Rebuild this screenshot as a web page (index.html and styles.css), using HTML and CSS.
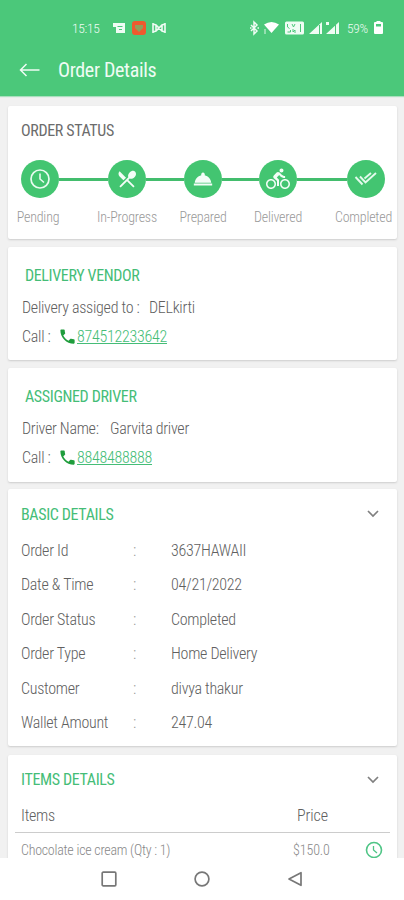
FILE: index.html
```html
<!DOCTYPE html>
<html lang="en">
<head>
<meta charset="utf-8">
<title>Order Details</title>
<link rel="stylesheet" href="styles.css">
</head>
<body>
<div class="screen">
  <header class="header">
    <div class="statusbar">
      <span class="clock">15:15</span>
      <svg class="notif" width="56" height="16" viewBox="0 0 56 16">
        <path fill="#effcf4" d="M0 3h12v10H3V7H0z"/>
        <path stroke="#4bc87a" stroke-width="1" fill="none" d="M4.500 6.500h5M6 9.500h3"/>
        <rect x="19" y="1" width="14" height="14" rx="3" fill="#ee5a2e"/>
        <path fill="#8fa05a" d="M26 12l-4-4V5h8v3z"/>
        <path stroke="#effcf4" stroke-width="1.600" fill="none" d="M40 3v10M52 3v10M40 4l3 1 6 6 3 1M52 4l-3 1-6 6-3 1M43 5v6M49 5v6"/>
      </svg>
      <svg class="signals" width="90" height="16" viewBox="0 0 90 16">
        <path stroke="#effcf4" stroke-width="1.500" fill="none" d="M2 5l6 6-3 3V2l3 3-6 6M1 8h1.500M8.500 8H10"/>
        <path fill="#fff" d="M15 4.500q7.500-5 15 0L22.500 13z"/>
        <path stroke="#dff7e8" fill="none" d="M16 9v5"/>
        <rect x="36" y="1.500" width="19" height="13" rx="1.500" fill="#effcf4"/>
        <path stroke="#4bc87a" fill="none" d="M38.500 4v3l2 1.500M43 4l1.500 3L46 4M38.500 12h3v-2M44 9v3l2-2v3M51.500 4v8"/>
        <path fill="#effcf4" d="M60 14L73 2v12zM77 14L90 2v12zM77 2h3v3h-3z"/>
        <path stroke="#4bc87a" fill="none" d="M70.500 5v9M86.500 5v9"/>
      </svg>
      <span class="percent">59%</span>
      <svg class="battery" width="9" height="14" viewBox="0 0 9 14"><path fill="#fff" d="M2.500 0h4v1H8q1 0 1 1v10q0 1-1 1H1q-1 0-1-1V2q0-1 1-1h1.500z"/><path fill="#4bc87a" d="M2 3h5v2.500H2z"/></svg>
    </div>
    <div class="appbar">
      <svg width="22" height="16" viewBox="0 0 22 16"><path stroke="#effcf4" stroke-width="1.500" fill="none" d="M20.500 8H2M7.500 2L1.500 8l6 6"/></svg>
      <h1 class="title">Order Details</h1>
    </div>
  </header>

  <main class="content">
    <section class="card card-status">
      <h2 class="heading heading-dark">ORDER STATUS</h2>
      <div class="stepper">
        <div class="step">
          <div class="dot"><svg width="22" height="22" viewBox="0 0 22 22"><circle cx="11" cy="11" r="9" fill="none" stroke="#e8fbf0" stroke-width="1.700"/><path fill="none" stroke="#e8fbf0" stroke-width="1.600" d="M11 5.500V11l4 3.500"/></svg></div>
          <span class="step-label label-first">Pending</span>
        </div>
        <i class="line line-a"></i>
        <div class="step">
          <div class="dot"><svg width="22" height="22" viewBox="0 0 24 24" fill="#f3fdf7"><path d="M8.100 13.340l2.830-2.830L3.910 3.500c-1.560 1.560-1.560 4.090 0 5.660l4.190 4.180zm6.780-1.810c1.530.71 3.680.21 5.270-1.380 1.910-1.910 2.280-4.650.81-6.120-1.460-1.460-4.200-1.100-6.120.81-1.590 1.590-2.090 3.740-1.380 5.270L3.700 19.870l1.410 1.410L12 14.410l6.880 6.880 1.410-1.410L13.410 13l1.470-1.470z"/></svg></div>
          <span class="step-label">In-Progress</span>
        </div>
        <i class="line line-b"></i>
        <div class="step">
          <div class="dot"><svg width="22" height="22" viewBox="0 0 24 24" fill="#f3fdf7"><path d="M2 17h20v2.200H2zM13.840 7.790A2 2 0 1 0 10.160 7.790C6.250 8.600 3.270 11.930 3 16h18c-.27-4.070-3.250-7.400-7.160-8.210z"/></svg></div>
          <span class="step-label">Prepared</span>
        </div>
        <i class="line line-c"></i>
        <div class="step">
          <div class="dot"><svg width="24" height="24" viewBox="0 0 24 24" fill="#f3fdf7"><path d="M15.500 5.500c1.100 0 2-.9 2-2s-.9-2-2-2-2 .9-2 2 .9 2 2 2zM5 12c-2.800 0-5 2.200-5 5s2.200 5 5 5 5-2.200 5-5-2.200-5-5-5zm0 8.500c-1.900 0-3.500-1.600-3.500-3.500s1.600-3.500 3.500-3.500 3.500 1.600 3.500 3.500-1.600 3.500-3.500 3.500zm5.800-10l2.400-2.400.8.800c1.300 1.300 3 2.100 5.100 2.100V9c-1.500 0-2.700-.6-3.600-1.500l-1.900-1.900c-.5-.4-1-.6-1.600-.6s-1.100.2-1.400.6L7.800 8.400c-.4.400-.6.900-.6 1.400 0 .6.200 1.100.6 1.400L11 14v5h2v-6.200l-2.200-2.300zM19 12c-2.800 0-5 2.200-5 5s2.200 5 5 5 5-2.200 5-5-2.200-5-5-5zm0 8.500c-1.900 0-3.500-1.600-3.500-3.500s1.600-3.500 3.500-3.500 3.500 1.600 3.500 3.500-1.600 3.500-3.500 3.500z"/></svg></div>
          <span class="step-label">Delivered</span>
        </div>
        <i class="line line-d"></i>
        <div class="step">
          <div class="dot"><svg width="24" height="24" viewBox="0 0 24 24" fill="none" stroke="#e3faec" stroke-width="1.900"><path d="M1.500 10l7 7.500M6 9.500l5.500 6L22 6M10.500 11.500L17 6"/></svg></div>
          <span class="step-label label-last">Completed</span>
        </div>
      </div>
    </section>

    <section class="card card-contact">
      <h2 class="heading inset">DELIVERY VENDOR</h2>
      <p class="row"><span class="key-vendor">Delivery assiged to :</span><span>DELkirti</span></p>
      <p class="row"><span class="key-call">Call :</span><svg class="phone" width="19" height="19" viewBox="0 0 24 24"><path fill="#1f9d3c" d="M6.620 10.790c1.440 2.830 3.760 5.140 6.590 6.590l2.200-2.200c.27-.27.67-.36 1.020-.24 1.120.37 2.330.57 3.570.57.550 0 1 .45 1 1V20c0 .55-.45 1-1 1-9.390 0-17-7.610-17-17 0-.55.45-1 1-1h3.500c.55 0 1 .45 1 1 0 1.250.2 2.450.57 3.570.11.350.03.740-.25 1.020l-2.200 2.200z"/></svg><span class="tel">874512233642</span></p>
    </section>

    <section class="card card-contact card-driver">
      <h2 class="heading inset">ASSIGNED DRIVER</h2>
      <p class="row"><span class="key-driver">Driver Name:</span><span>Garvita driver</span></p>
      <p class="row"><span class="key-call">Call :</span><svg class="phone" width="19" height="19" viewBox="0 0 24 24"><path fill="#1f9d3c" d="M6.620 10.790c1.440 2.830 3.760 5.140 6.590 6.590l2.200-2.200c.27-.27.67-.36 1.020-.24 1.120.37 2.330.57 3.570.57.550 0 1 .45 1 1V20c0 .55-.45 1-1 1-9.390 0-17-7.610-17-17 0-.55.45-1 1-1h3.500c.55 0 1 .45 1 1 0 1.250.2 2.450.57 3.570.11.350.03.740-.25 1.020l-2.200 2.200z"/></svg><span class="tel">8848488888</span></p>
    </section>

    <section class="card card-basic">
      <div class="card-head"><h2 class="heading">BASIC DETAILS</h2><svg width="12" height="8" viewBox="0 0 12 8"><path d="M1 1l5 5 5-5" fill="none" stroke="#808080" stroke-width="1.700"/></svg></div>
      <div class="fields">
        <span>Order Id</span><span class="colon">:</span><span>3637HAWAII</span>
        <span>Date &amp; Time</span><span class="colon">:</span><span>04/21/2022</span>
        <span>Order Status</span><span class="colon">:</span><span>Completed</span>
        <span>Order Type</span><span class="colon">:</span><span>Home Delivery</span>
        <span>Customer</span><span class="colon">:</span><span>divya thakur</span>
        <span>Wallet Amount</span><span class="colon">:</span><span>247.04</span>
      </div>
    </section>

    <section class="card card-items">
      <div class="card-head"><h2 class="heading">ITEMS DETAILS</h2><svg width="12" height="8" viewBox="0 0 12 8"><path d="M1 1l5 5 5-5" fill="none" stroke="#808080" stroke-width="1.700"/></svg></div>
      <div class="item-row item-head"><span class="item-name">Items</span><span class="item-price">Price</span></div>
      <div class="item-row item"><span class="item-name">Chocolate ice cream (Qty : 1)</span><span class="item-price">$150.0</span><svg width="18" height="18" viewBox="0 0 18 18"><circle cx="9" cy="9" r="7.500" fill="none" stroke="#4fc586" stroke-width="1.600"/><path fill="none" stroke="#4fc586" stroke-width="1.300" d="M8.500 5v4l3.500 3"/></svg></div>
    </section>
  </main>

  <nav class="navbar">
    <svg width="16" height="16" viewBox="0 0 16 16"><rect x="1.200" y="1.200" width="13.600" height="13.600" rx="1" fill="none" stroke="#777" stroke-width="1.700"/></svg>
    <svg width="16" height="16" viewBox="0 0 16 16"><circle cx="8" cy="8" r="6.900" fill="none" stroke="#777" stroke-width="1.700"/></svg>
    <svg width="16" height="16" viewBox="0 0 16 16"><path d="M14 1.700v12.600L2 8z" fill="none" stroke="#777" stroke-width="1.700" stroke-linejoin="round"/></svg>
  </nav>
</div>
</body>
</html>
```
FILE: styles.css
```css
* { box-sizing: border-box; margin: 0; padding: 0; }

body {
  font-family: "Roboto Condensed", Roboto, sans-serif;
  font-stretch: 75%;
  font-weight: 300;
  font-size: 16px;
  letter-spacing: -0.28px;
  color: #606060;
  background: #f1f1f1;
}

svg { display: block; flex: none; }

.screen { width: 404px; height: 900px; display: flex; flex-direction: column; overflow: hidden; }

.header { height: 96px; flex: none; background: #4bc87a; color: #effcf4; box-shadow: 0 1px 1px #a9dfbe; }
.statusbar { height: 36px; padding: 19px 20px 0 72px; display: flex; align-items: center; font-size: 13.5px; font-stretch: 100%; white-space: nowrap; }
.clock { width: 41px; }
.signals { margin-left: 80px; }
.percent { width: 24px; margin-left: 8px; }
.battery { margin-left: 3px; }
.appbar { height: 36px; margin-top: 16px; padding-left: 19px; display: flex; align-items: center; gap: 17px; }
.title { font-size: 20px; font-weight: 400; letter-spacing: -0.33px; }

.content { flex: 1; min-height: 0; overflow: hidden; padding: 10px 7px 0 8px; display: flex; flex-direction: column; }
.card { flex: none; background: #fff; border-radius: 2px; box-shadow: 0 1px 2px #ccc; }

.heading { font-size: 16px; line-height: 20px; font-weight: 400; letter-spacing: -0.36px; color: #45bd77; white-space: nowrap; }
.heading-dark { color: #6c6c6c; }
.inset { padding-left: 3px; }

.card-status { height: 133px; padding: 15px 13px 0; margin-bottom: 8px; }
.stepper { display: flex; margin-top: 19px; width: 364px; }
.step { width: 38px; display: flex; flex-direction: column; align-items: center; }
.dot { width: 38px; height: 38px; border-radius: 50%; background: #43c571; display: grid; place-items: center; }
.step-label { margin-top: 10px; font-size: 14px; line-height: 19px; letter-spacing: -0.2px; color: #999; white-space: nowrap; }
.label-first { margin-left: -4px; }
.label-last { margin-right: 5px; }
.line { height: 3px; margin-top: 18px; background: #43bd6d; }
.line-a { width: 49px; }
.line-b { width: 38px; }
.line-c { width: 37px; }
.line-d { width: 50px; }

.card-contact { height: 113px; padding: 19px 14px 0; margin-bottom: 8px; }
.card-driver { height: 114px; margin-bottom: 7px; }
.row { display: flex; align-items: center; height: 29px; white-space: nowrap; }
.heading + .row { margin-top: 7px; }
.key-vendor { width: 127px; }
.key-driver { width: 88px; }
.key-call { width: 36px; }
.tel { color: #45bd77; text-decoration: underline; }

.card-basic { height: 257px; padding: 15px 18px 0 13px; margin-bottom: 9px; }
.card-basic .heading { padding-top: 1px; }
.card-head { display: flex; justify-content: space-between; align-items: center; height: 20px; }
.fields { margin-top: 9px; display: grid; grid-template-columns: 112px 38px 1fr; grid-auto-rows: 34.5px; align-items: center; white-space: nowrap; }
.colon { color: #999; }

.card-items { height: 180px; padding: 15px 7px 0; }
.card-items .card-head { padding: 0 11px 0 6px; }
.item-row { display: flex; align-items: center; padding: 0 7px 0 6px; white-space: nowrap; }
.item-head { height: 43px; padding-top: 8px; border-bottom: 1px solid #ccc; }
.item-name { width: 272px; }
.item-head .item-name { width: 276px; }
.item { height: 34px; font-size: 14px; letter-spacing: -0.25px; color: #888; }
.item-price { flex: 1; letter-spacing: -0.1px; }

.navbar { height: 42px; flex: none; background: #fff; display: flex; justify-content: center; align-items: center; gap: 77px; }
```
